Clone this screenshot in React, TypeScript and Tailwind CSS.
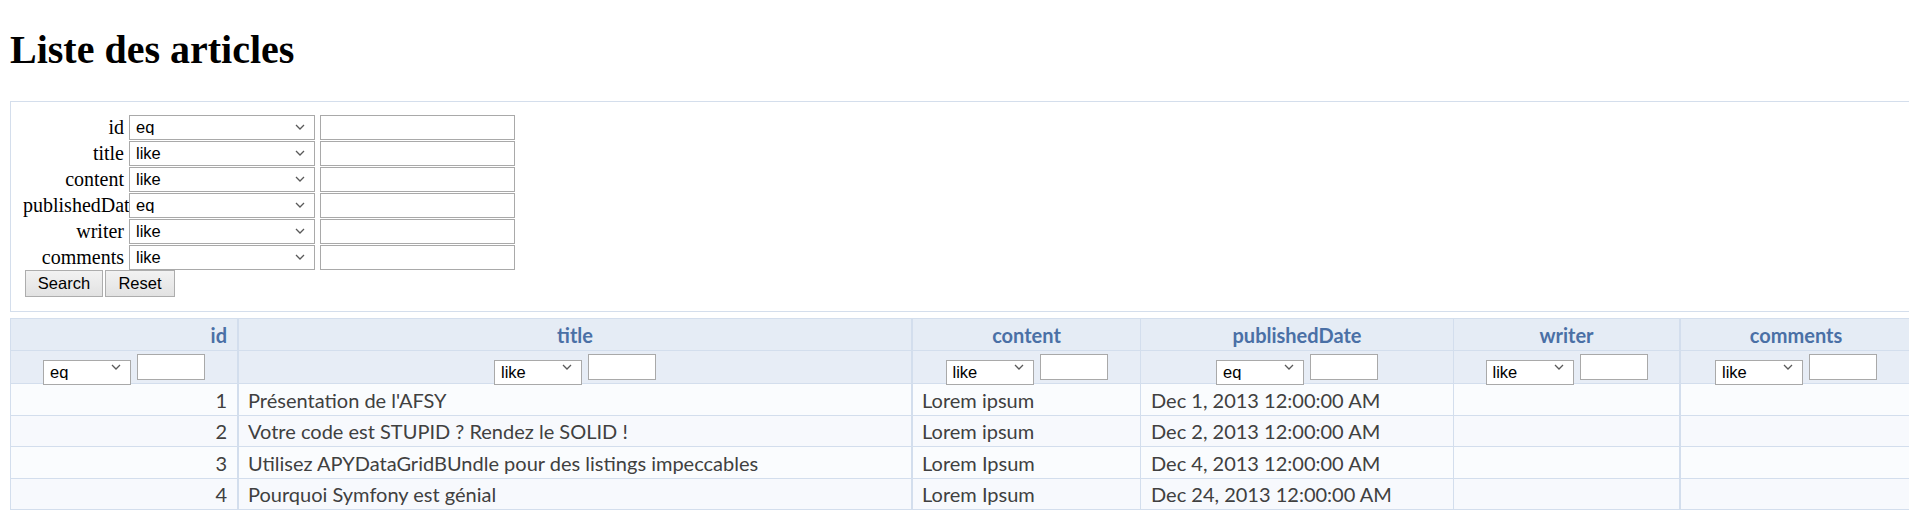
import React from 'react';

const filters = [
  { name: 'id', op: 'eq' },
  { name: 'title', op: 'like' },
  { name: 'content', op: 'like' },
  { name: 'publishedDate', op: 'eq' },
  { name: 'writer', op: 'like' },
  { name: 'comments', op: 'like' },
];

// column borders differ a bit because the original was rendered at 125%
const columns = [
  { key: 'id', op: 'eq', border: 'border-r-2', align: 'text-right' },
  { key: 'title', op: 'like', border: 'border-r-2', align: 'text-center' },
  { key: 'content', op: 'like', border: 'border-r', align: 'text-center' },
  { key: 'publishedDate', op: 'eq', border: 'border-r', align: 'text-center' },
  { key: 'writer', op: 'like', border: 'border-r-2', align: 'text-center' },
  { key: 'comments', op: 'like', border: 'border-r', align: 'text-center' },
];

const articles = [
  { id: 1, title: "Présentation de l'AFSY", content: 'Lorem ipsum', date: 'Dec 1, 2013 12:00:00 AM' },
  { id: 2, title: 'Votre code est STUPID ? Rendez le SOLID !', content: 'Lorem ipsum', date: 'Dec 2, 2013 12:00:00 AM' },
  { id: 3, title: 'Utilisez APYDataGridBUndle pour des listings impeccables', content: 'Lorem Ipsum', date: 'Dec 4, 2013 12:00:00 AM' },
  { id: 4, title: 'Pourquoi Symfony est génial', content: 'Lorem Ipsum', date: 'Dec 24, 2013 12:00:00 AM' },
];

const Chevron: React.FC = () => (
  <svg width="10" height="6" viewBox="0 0 10 6" className="pointer-events-none absolute right-[10px] top-1/2 -translate-y-1/2">
    <path d="M1 1l4 4 4-4" fill="none" stroke="#5a5a5a" strokeWidth="1.3" />
  </svg>
);

const Select: React.FC<{ value: string; className: string }> = ({ value, className }) => (
  <div className={`relative ${className}`}>
    <select
      defaultValue={value}
      className="h-full w-full appearance-none rounded-none border border-[#a9a9a9] bg-white pb-[2px] pl-[6px] font-['Liberation_Sans',Arial,sans-serif] text-[16.5px] leading-none text-black outline-none"
    >
      <option value="eq">eq</option>
      <option value="like">like</option>
    </select>
    <Chevron />
  </div>
);

const TextInput: React.FC<{ className: string }> = ({ className }) => (
  <input type="text" className={`border border-[#a9a9a9] bg-white outline-none ${className}`} />
);

export default function App() {
  return (
    <div className="w-[1909px] overflow-hidden bg-white pb-[8px] pt-[27px]">
      <h1 className="ml-[10px] font-['Liberation_Serif',serif] text-[40px] font-bold leading-[46px] text-black">
        Liste des articles
      </h1>

      <div className="ml-[10px] mt-[28px] w-[1900px] border border-[#d4deec] pb-[14px] pl-[12px] pt-[12px]">
        <div className="grid grid-cols-[106px_186px_200px]">
          {filters.map((f) => (
            <React.Fragment key={f.name}>
              <div className="h-[26px] overflow-hidden whitespace-nowrap pr-[5px] text-right font-['Liberation_Serif',serif] text-[20px] leading-[26px] text-black">
                {f.name}
              </div>
              <div className="flex h-[26px] items-center">
                <Select value={f.op} className="h-[25px] w-[186px]" />
              </div>
              <div className="flex h-[26px] items-center pl-[5px]">
                <TextInput className="h-[25px] w-[195px]" />
              </div>
            </React.Fragment>
          ))}
        </div>
        <div className="ml-[2px] flex gap-[2px] font-['Liberation_Sans',Arial,sans-serif] text-[16.5px] text-black">
          <button className="h-[27px] w-[78px] border border-[#adadad] bg-gradient-to-b from-[#f2f2f2] to-[#e2e2e2]">Search</button>
          <button className="h-[27px] w-[70px] border border-[#adadad] bg-gradient-to-b from-[#f2f2f2] to-[#e2e2e2]">Reset</button>
        </div>
      </div>

      <div className="ml-[10px] mt-[6px] w-[1901px] border-l border-t border-[#d3deed] font-['Lato',sans-serif] text-[20px]">
        <div className="grid h-[32px] grid-cols-[228px_674px_228px_313px_227px_231px] bg-[#e5ecf5]">
          {columns.map((c) => (
            <div
              key={c.key}
              className={`flex items-center border-b border-[#d3deed] ${c.border} ${c.align === 'text-right' ? 'justify-end pr-[10px]' : 'justify-center'} font-bold text-[#4a70a6]`}
            >
              {c.key}
            </div>
          ))}
        </div>
        <div className="grid h-[33px] grid-cols-[228px_674px_228px_313px_227px_231px] bg-[#e7edf6]">
          {columns.map((c) => (
            <div key={c.key} className={`flex items-center justify-center gap-[6px] border-b border-[#d3deed] ${c.border}`}>
              <Select value={c.op} className="h-[25px] w-[88px]" />
              <TextInput className="h-[26px] w-[68px]" />
            </div>
          ))}
        </div>
        {articles.map((a, i) => (
          <div
            key={a.id}
            className={`grid grid-cols-[228px_674px_228px_313px_227px_231px] text-[#404040] ${i % 2 === 0 ? 'h-[32px] bg-[#fafcfe]' : 'h-[31px] bg-[#f7f9fd]'}`}
          >
            <div className="flex items-center justify-end border-b border-r-2 border-[#d3deed] pr-[10px]">{a.id}</div>
            <div className="flex items-center border-b border-r-2 border-[#d3deed] pl-[9px]">{a.title}</div>
            <div className="flex items-center border-b border-r border-[#d3deed] pl-[9px]">{a.content}</div>
            <div className="flex items-center border-b border-r border-[#d3deed] pl-[10px]">{a.date}</div>
            <div className="border-b border-r-2 border-[#d3deed]" />
            <div className="border-b border-r border-[#d3deed]" />
          </div>
        ))}
      </div>
    </div>
  );
}
